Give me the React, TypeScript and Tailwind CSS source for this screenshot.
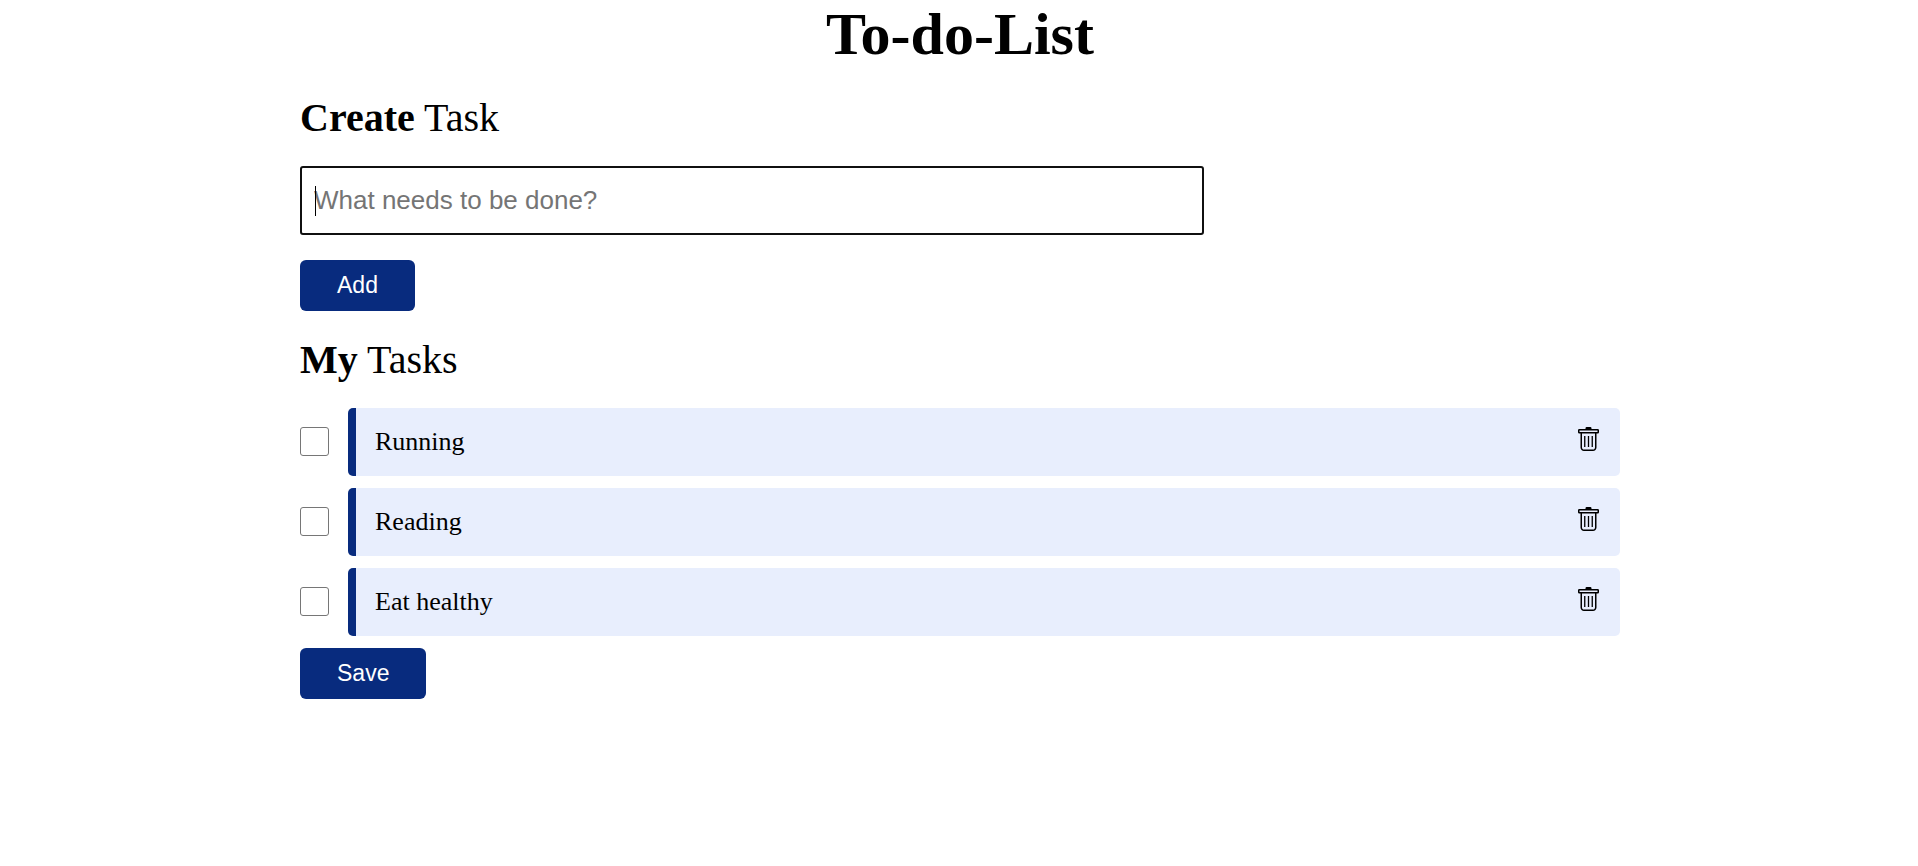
import { useState } from "react";

const buttonClass =
  "block cursor-pointer rounded-md bg-[#082b7e] px-[37px] py-3 font-['Liberation_Sans',Arial,sans-serif] text-[23px] leading-[27px] text-white";

const headingClass = "text-[40px] leading-[46px]";

function TrashIcon() {
  return (
    <svg viewBox="0 0 24 24" className="size-6" fill="none" stroke="currentColor" strokeWidth="1.5" aria-hidden="true">
      <path d="M9.5 2.4V1.2A1.2 1.2 0 0 1 10.7 0h3.6a1.2 1.2 0 0 1 1.2 1.2v1.2z" fill="currentColor" stroke="none" />
      <rect x="2.75" y="2.75" width="19.5" height="3" rx="0.6" />
      <path d="M5.25 5.75V20.5A2.75 2.75 0 0 0 8 23.25h9a2.75 2.75 0 0 0 2.75-2.75V5.75" />
      <path d="M8.75 9v11M12.5 9v11M16.25 9v11" strokeWidth="1.3" />
    </svg>
  );
}

export default function App() {
  const [tasks, setTasks] = useState(["Running", "Reading", "Eat healthy"]);
  const [draft, setDraft] = useState("");

  const addTask = () => {
    if (draft.trim()) setTasks([...tasks, draft.trim()]);
    setDraft("");
  };

  return (
    <main className="mx-auto max-w-[1322px] pl-0.5 font-['Liberation_Serif','Times_New_Roman',serif] text-black">
      <h1 className="text-center text-[60px] leading-[68px] font-bold">To-do-List</h1>

      <h2 className={`mt-[27px] ${headingClass}`}>
        <b>Create</b> Task
      </h2>
      <div className="relative mt-[25px]">
        <input
          type="text"
          aria-label="New task"
          placeholder="What needs to be done?"
          autoFocus
          value={draft}
          onChange={(e) => setDraft(e.target.value)}
          className="block h-[69px] w-full max-w-[904px] rounded-[3px] border-2 border-[#101010] bg-white px-3 font-['Liberation_Sans',Arial,sans-serif] text-[26px] leading-[30px] outline-none placeholder:text-[#757575] placeholder-shown:caret-transparent"
        />
        {draft === "" && (
          <span aria-hidden="true" className="pointer-events-none absolute top-5 left-[15px] h-[30px] w-px bg-black" />
        )}
      </div>
      <button type="button" onClick={addTask} className={`mt-[25px] ${buttonClass}`}>
        Add
      </button>

      <h2 className={`mt-[26px] ${headingClass}`}>
        <b>My</b> Tasks
      </h2>
      <ul className="mt-[25px] flex flex-col gap-3">
        {tasks.map((task, i) => (
          <li key={i} className="flex items-center">
            <input
              type="checkbox"
              id={`task-${i}`}
              className="mr-[19px] mb-px size-[29px] shrink-0 appearance-none rounded-[3px] border border-[#767676] bg-white checked:bg-[#082b7e]"
            />
            <div className="flex h-[68px] grow items-center justify-between rounded-[5px] border-l-8 border-[#082b7e] bg-[#e8eefd] pr-5 pl-[19px]">
              <label htmlFor={`task-${i}`} className="text-[26px] leading-[30px]">
                {task}
              </label>
              <button
                type="button"
                aria-label={`Delete ${task}`}
                onClick={() => setTasks(tasks.filter((_, j) => j !== i))}
                className="mb-1.5 cursor-pointer"
              >
                <TrashIcon />
              </button>
            </div>
          </li>
        ))}
      </ul>
      <button type="button" className={`mt-3 ${buttonClass}`}>
        Save
      </button>
    </main>
  );
}
